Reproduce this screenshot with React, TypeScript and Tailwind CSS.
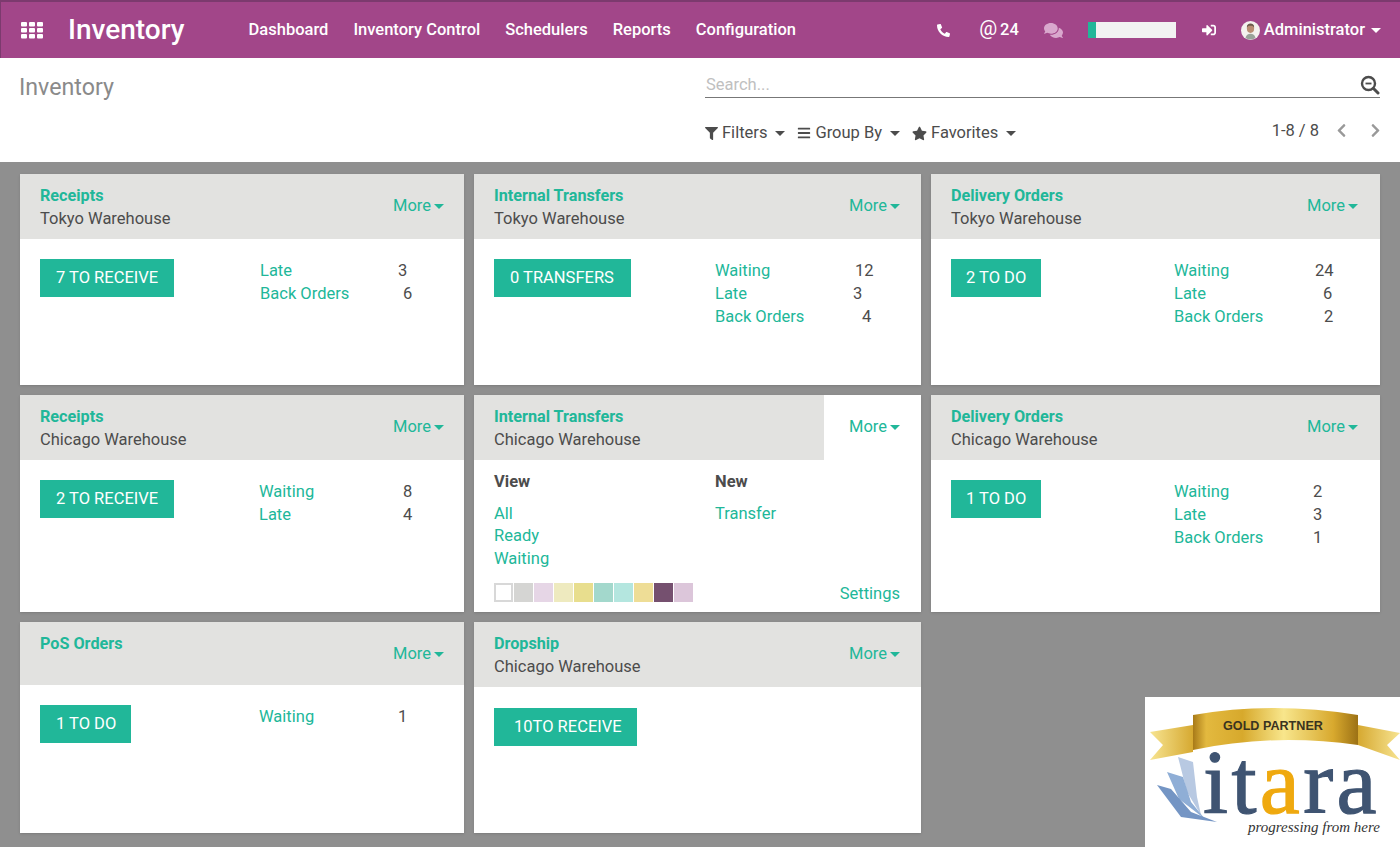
import { FaBars, FaChevronLeft, FaChevronRight, FaComments, FaFilter, FaPhone, FaSignInAlt, FaStar } from 'react-icons/fa'

const menu = ['Dashboard', 'Inventory Control', 'Schedulers', 'Reports', 'Configuration']
const swatches = ['bg-white border-2 border-[#d8d8d8]', 'bg-[#d5d5d3]', 'bg-[#e6d6e6]', 'bg-[#eeeabf]', 'bg-[#e8de8e]', 'bg-[#a3d8cc]', 'bg-[#b4e6df]', 'bg-[#eedd96]', 'bg-[#75506f]', 'bg-[#dcc6da]']

type Stat = { label: string; value: string; gap: string }
type CardData = {
  title: string
  sub?: string
  button: string
  btnPad: string
  btnW: string
  head: string
  btnTop: string
  stats: Stat[]
}

function Caret({ className = '' }: { className?: string }) {
  return <span className={`inline-block border-x-[5px] border-t-[5px] border-x-transparent border-t-current ${className}`} />
}

function AppsIcon() {
  return (
    <svg width="22" height="17" viewBox="0 0 22 17" fill="white">
      {[0, 6, 12].map((y) =>
        [0, 8, 16].map((x) => <rect key={`${x}-${y}`} x={x} y={y} width="6" height="4.6" rx="1" />)
      )}
    </svg>
  )
}

function Avatar() {
  return (
    <svg width="19" height="19" viewBox="0 0 19 19">
      <circle cx="9.5" cy="9.5" r="9.5" fill="#f4f1ee" />
      <ellipse cx="9.5" cy="7.5" rx="3.6" ry="4.4" fill="#b98d73" />
      <path d="M5.8 6.5c0-3 1.6-4 3.7-4s3.7 1 3.7 4c-1-1.5-2-1.8-3.7-1.8s-2.7.3-3.7 1.8z" fill="#6b5a4c" />
      <path d="M4.5 17c.6-3 2.5-4.2 5-4.2s4.4 1.2 5 4.2a9.5 9.5 0 0 1-10 0z" fill="#9aa39a" />
    </svg>
  )
}

function SearchIcon() {
  return (
    <svg width="20" height="20" viewBox="0 0 20 20" fill="none" stroke="#4c4c4c">
      <circle cx="8.5" cy="8.5" r="6.5" strokeWidth="2.4" />
      <path d="M5.5 8.5h6" strokeWidth="1.8" />
      <path d="M13.5 13.5l4.5 4.5" strokeWidth="3" strokeLinecap="round" />
    </svg>
  )
}

function ItaraLogo() {
  return (
    <svg width="255" height="150" viewBox="0 0 255 150" className="block">
      <defs>
        <linearGradient id="gold" x1="0" x2="1" y1="0" y2="0">
          <stop offset="0" stopColor="#a87a18" />
          <stop offset="0.08" stopColor="#e3b93f" />
          <stop offset="0.3" stopColor="#d7a92c" />
          <stop offset="0.55" stopColor="#f8e68c" />
          <stop offset="0.85" stopColor="#d8a92e" />
          <stop offset="1" stopColor="#9c7115" />
        </linearGradient>
        <linearGradient id="tail" x1="0" x2="1" y1="0" y2="0">
          <stop offset="0" stopColor="#f7e491" />
          <stop offset="1" stopColor="#d6a931" />
        </linearGradient>
        <linearGradient id="tailR" x1="1" x2="0" y1="0" y2="0">
          <stop offset="0" stopColor="#f7e491" />
          <stop offset="1" stopColor="#d6a931" />
        </linearGradient>
      </defs>
      <path d="M5 35 L48 28 L48 55 L5 63 L18 48 Z" fill="url(#tail)" />
      <path d="M213 28 L255 36 L242 48 L255 63 L213 48 Z" fill="url(#tailR)" />
      <path d="M48 18 Q128 4 213 18 L213 48 Q128 36 48 53 Z" fill="url(#gold)" />
      <text x="128" y="33" textAnchor="middle" fontFamily="'Liberation Sans', sans-serif" fontSize="12.6" fontWeight="700" fill="#3a3320">GOLD PARTNER</text>
      <path d="M33 60 L48 65 L52 100 L56 118 L42 95 Z" fill="#b8c9e2" />
      <path d="M22 75 L38 80 L46 105 L60 122 L34 102 Z" fill="#8faed6" />
      <path d="M12 88 L26 92 L46 115 L72 125 L36 120 Z" fill="#7495c4" />
      <text x="58" y="116" fontFamily="'Liberation Serif', serif" fontSize="90" letterSpacing="3.4" stroke="#3f5472" strokeWidth="1.2" fill="#3f5472">
        it<tspan fill="#efa90f" stroke="#efa90f">a</tspan>ra
      </text>
      <text x="103" y="135" fontFamily="'Liberation Serif', serif" fontStyle="italic" fontSize="15" fill="#333">progressing from here</text>
    </svg>
  )
}

function MoreLink() {
  return (
    <span className="flex h-[43px] items-center gap-[3px] text-[#21b799]">
      More <Caret />
    </span>
  )
}

function Card({ data }: { data: CardData }) {
  return (
    <div className="bg-white shadow-sm">
      <div className={`flex justify-between bg-[#e2e2e0] pl-5 pt-[11px] ${data.head}`}>
        <div className="leading-[22.5px]">
          <div className="text-[16.2px] font-bold text-[#21b799]">{data.title}</div>
          <div>{data.sub}</div>
        </div>
        <MoreLink />
      </div>
      <div className={`flex pl-5 ${data.btnTop}`}>
        <div className={data.btnW}>
          <span className={`inline-flex h-[38px] items-center justify-center bg-[#21b799] pt-px text-white ${data.btnPad}`}>{data.button}</span>
        </div>
        <div className="pt-px leading-[22.8px]">
          {data.stats.map((s) => (
            <div key={s.label} className="flex">
              <span className={`text-[#21b799] ${s.gap}`}>{s.label}</span>
              <span>{s.value}</span>
            </div>
          ))}
        </div>
      </div>
    </div>
  )
}

function OpenCard() {
  return (
    <div className="relative bg-white shadow-sm">
      <div className="flex">
        <div className="h-[65px] w-[350px] bg-[#e2e2e0] pl-5 pt-[11px] leading-[22.5px]">
          <div className="text-[16.2px] font-bold text-[#21b799]">Internal Transfers</div>
          <div>Chicago Warehouse</div>
        </div>
        <div className="flex flex-1 justify-end pr-[21px] pt-[11px]">
          <MoreLink />
        </div>
      </div>
      <div className="flex pl-5 pt-[11px] leading-[22.5px]">
        <div className="w-[221px]">
          <div className="mb-[9px] font-bold">View</div>
          <div className="text-[#21b799]">All</div>
          <div className="text-[#21b799]">Ready</div>
          <div className="text-[#21b799]">Waiting</div>
        </div>
        <div>
          <div className="mb-[9px] font-bold">New</div>
          <div className="text-[#21b799]">Transfer</div>
        </div>
      </div>
      <div className="mt-[8px] flex items-center justify-between pl-5 pr-[21px]">
        <div className="flex">
          {swatches.map((c) => (
            <span key={c} className={`mr-px h-[19px] w-[19px] ${c}`} />
          ))}
        </div>
        <span className="pt-[4px] text-[#21b799]">Settings</span>
      </div>
    </div>
  )
}

const row1: CardData[] = [
  {
    title: 'Receipts', sub: 'Tokyo Warehouse', button: '7 TO RECEIVE', btnPad: 'px-4', btnW: 'w-[220px]', head: 'h-[65px] pr-5', btnTop: 'pt-5',
    stats: [
      { label: 'Late', value: '3', gap: 'w-[138px]' },
      { label: 'Back Orders', value: '6', gap: 'w-[143px]' },
    ],
  },
  {
    title: 'Internal Transfers', sub: 'Tokyo Warehouse', button: '0 TRANSFERS', btnPad: 'pl-4 pr-[17px]', btnW: 'w-[221px]', head: 'h-[65px] pr-[21px]', btnTop: 'pt-5',
    stats: [
      { label: 'Waiting', value: '12', gap: 'w-[140px]' },
      { label: 'Late', value: '3', gap: 'w-[138px]' },
      { label: 'Back Orders', value: '4', gap: 'w-[147px]' },
    ],
  },
  {
    title: 'Delivery Orders', sub: 'Tokyo Warehouse', button: '2 TO DO', btnPad: 'px-[15px]', btnW: 'w-[223px]', head: 'h-[65px] pr-[22px]', btnTop: 'pt-5',
    stats: [
      { label: 'Waiting', value: '24', gap: 'w-[141px]' },
      { label: 'Late', value: '6', gap: 'w-[149px]' },
      { label: 'Back Orders', value: '2', gap: 'w-[150px]' },
    ],
  },
]

const receiptsChicago: CardData = {
  title: 'Receipts', sub: 'Chicago Warehouse', button: '2 TO RECEIVE', btnPad: 'px-4', btnW: 'w-[219px]', head: 'h-[65px] pr-5', btnTop: 'pt-5',
  stats: [
    { label: 'Waiting', value: '8', gap: 'w-[144px]' },
    { label: 'Late', value: '4', gap: 'w-[144px]' },
  ],
}

const deliveryChicago: CardData = {
  title: 'Delivery Orders', sub: 'Chicago Warehouse', button: '1 TO DO', btnPad: 'px-[15px]', btnW: 'w-[223px]', head: 'h-[65px] pr-[22px]', btnTop: 'pt-5',
  stats: [
    { label: 'Waiting', value: '2', gap: 'w-[139px]' },
    { label: 'Late', value: '3', gap: 'w-[139px]' },
    { label: 'Back Orders', value: '1', gap: 'w-[139px]' },
  ],
}

const row3: CardData[] = [
  {
    title: 'PoS Orders', button: '1 TO DO', btnPad: 'pl-4 pr-[15px]', btnW: 'w-[219px]', head: 'h-[63px] pr-5', btnTop: 'pt-5',
    stats: [{ label: 'Waiting', value: '1', gap: 'w-[139px]' }],
  },
  {
    title: 'Dropship', sub: 'Chicago Warehouse', button: '10TO RECEIVE', btnPad: 'pl-5 pr-[15px]', btnW: 'w-[221px]', head: 'h-[65px] pr-[21px]', btnTop: 'pt-[21px]',
    stats: [],
  },
]

export default function App() {
  return (
    <div className="relative h-[847px] w-[1400px] overflow-hidden bg-[#8f8f8f] font-['Roboto',sans-serif] text-[16.5px] text-[#4c4c4c]">
      <header className="flex h-[58px] items-center border-t-2 border-l border-[#7c3a6e] bg-[#a24689] pl-[20px] pr-[19px] text-white shadow-[0_1px_3px_rgba(0,0,0,0.4)]">
        <AppsIcon />
        <span className="ml-[25px] text-[28px] font-medium leading-none">Inventory</span>
        <nav className="ml-[64px] flex gap-[25px] font-medium">
          {menu.map((m) => (
            <span key={m}>{m}</span>
          ))}
        </nav>
        <div className="ml-auto flex items-center">
          <FaPhone className="h-[13px] w-[13px] -scale-x-100" />
          <span className="ml-[29px] flex items-center gap-[3px]">
            <span className="-mt-[5px] text-[20px] leading-none">@</span>
            <span className="font-medium">24</span>
          </span>
          <FaComments className="ml-[25px] h-[19px] w-[19px] text-[#d9a8cd]" />
          <div className="ml-[25px] flex h-[16px] w-[88px] bg-[#f2f2f2]">
            <div className="h-full w-[8px] bg-[#21b799]" />
          </div>
          <FaSignInAlt className="ml-[26px] h-[14px] w-[14px]" />
          <span className="ml-[25px] flex items-center gap-[4px]">
            <Avatar />
            <span className="font-medium">Administrator</span>
          </span>
          <Caret className="ml-[6px]" />
        </div>
      </header>

      <section className="flex h-[104px] justify-between bg-white pl-[19px] pr-5">
        <h1 className="pt-[15px] text-[23.2px] leading-[28px] text-[#8a8a8a]">Inventory</h1>
        <div className="w-[675px]">
          <div className="mt-[14px] flex h-[26px] items-center justify-between border-b border-[#777]">
            <span className="pl-px pt-px text-[#c0c0c0]">Search...</span>
            <SearchIcon />
          </div>
          <div className="mt-[23px] flex items-center justify-between">
            <div className="flex items-center">
              <FaFilter className="h-[13px] w-[13px]" />
              <span className="ml-[4px]">Filters</span>
              <Caret className="ml-[8px]" />
              <FaBars className="ml-[12px] h-[14px] w-[14px]" />
              <span className="ml-[4px]">Group By</span>
              <Caret className="ml-[8px]" />
              <FaStar className="ml-[12px] h-[15px] w-[15px]" />
              <span className="ml-[4px]">Favorites</span>
              <Caret className="ml-[8px]" />
            </div>
            <div className="-mr-[3px] -mt-[5px] flex items-center">
              <span>1-8 / 8</span>
              <FaChevronLeft className="ml-[15px] h-[15px] w-[15px] text-[#999]" />
              <FaChevronRight className="ml-[19px] h-[15px] w-[15px] text-[#999]" />
            </div>
          </div>
        </div>
      </section>

      <main className="grid grid-cols-[444px_447px_449px] grid-rows-[211px_217px_211px] gap-[10px] pl-5 pt-3">
        {row1.map((c) => (
          <Card key={c.title} data={c} />
        ))}
        <Card data={receiptsChicago} />
        <OpenCard />
        <Card data={deliveryChicago} />
        {row3.map((c) => (
          <Card key={c.title} data={c} />
        ))}
      </main>

      <div className="absolute bottom-0 right-0 h-[150px] w-[255px] bg-white">
        <ItaraLogo />
      </div>
    </div>
  )
}
